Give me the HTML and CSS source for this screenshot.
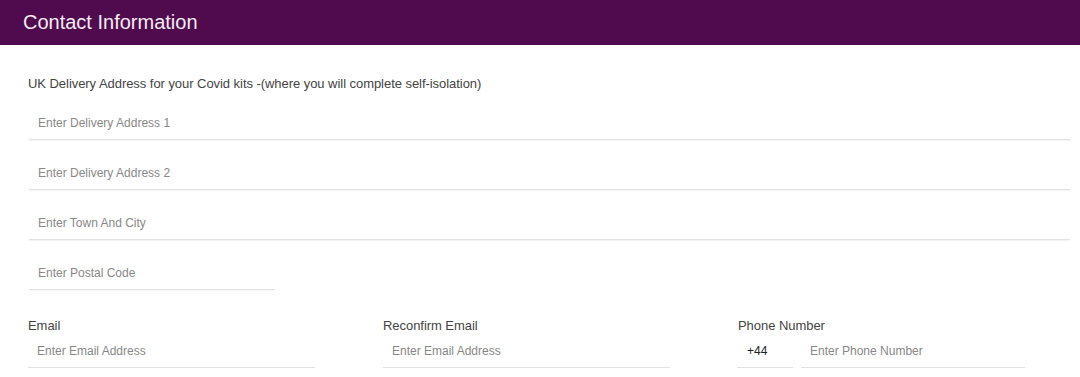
FILE: index.html
```html
<!DOCTYPE html>
<html lang="en">
<head>
<meta charset="utf-8">
<title>Contact Information</title>
<link rel="stylesheet" href="styles.css">
</head>
<body>
<div class="header">Contact Information</div>
<div class="content">
  <div class="subtitle">UK Delivery Address for your Covid kits -(where you will complete self-isolation)</div>
  <input class="field" type="text" placeholder="Enter Delivery Address 1">
  <input class="field" type="text" placeholder="Enter Delivery Address 2">
  <input class="field" type="text" placeholder="Enter Town And City">
  <input class="field postal" type="text" placeholder="Enter Postal Code">
  <div class="row">
    <div class="col">
      <label class="label">Email</label>
      <input class="field" type="text" placeholder="Enter Email Address">
    </div>
    <div class="col">
      <label class="label">Reconfirm Email</label>
      <input class="field" type="text" placeholder="Enter Email Address">
    </div>
    <div class="col">
      <label class="label">Phone Number</label>
      <div class="phone">
        <input class="field code" type="text" value="+44">
        <input class="field" type="text" placeholder="Enter Phone Number">
      </div>
    </div>
  </div>
</div>
</body>
</html>
```
FILE: styles.css
```css
* { box-sizing: border-box; }
html, body { margin: 0; padding: 0; background: #fff; }
body { font-family: "Liberation Sans", Arial, sans-serif; color: #444; }
.header {
  height: 45px;
  line-height: 45px;
  background: #500a4e;
  color: #f4ecf4;
  font-size: 20px;
  padding-left: 23px;
}
.content {
  padding: 31px 11px 0 28px;
  display: flex;
  flex-direction: column;
}
.subtitle {
  font-size: 13px;
  line-height: 16px;
  color: #444;
  letter-spacing: -0.05px;
  margin-bottom: 13px;
}
.field {
  display: block;
  width: 100%;
  height: 35px;
  border: none;
  border-bottom: 1px solid #e2e2e2;
  box-shadow: 0 1px 1px rgba(0,0,0,0.04);
  background: #fff;
  font-family: "Liberation Sans", Arial, sans-serif;
  font-size: 12px;
  color: #222;
  padding: 2px 9px 0;
  margin: 0 0 15px 1px;
  outline: none;
}
.field::placeholder { color: #888; }
.postal { width: 246px; }
.row {
  display: grid;
  grid-template-columns: 287px 287px 287px;
  column-gap: 68px;
  margin-top: 13px;
}
.col { display: flex; flex-direction: column; }
.label {
  font-size: 13px;
  line-height: 16px;
  color: #444;
  letter-spacing: -0.05px;
}
.row .field { margin: 0; height: 34px; padding-top: 1px; }
.phone { display: flex; gap: 8px; margin-left: -1px; }
.phone .code { width: 56px; flex: none; padding-left: 10px; }
.phone .field:last-child { flex: 1; }
```
